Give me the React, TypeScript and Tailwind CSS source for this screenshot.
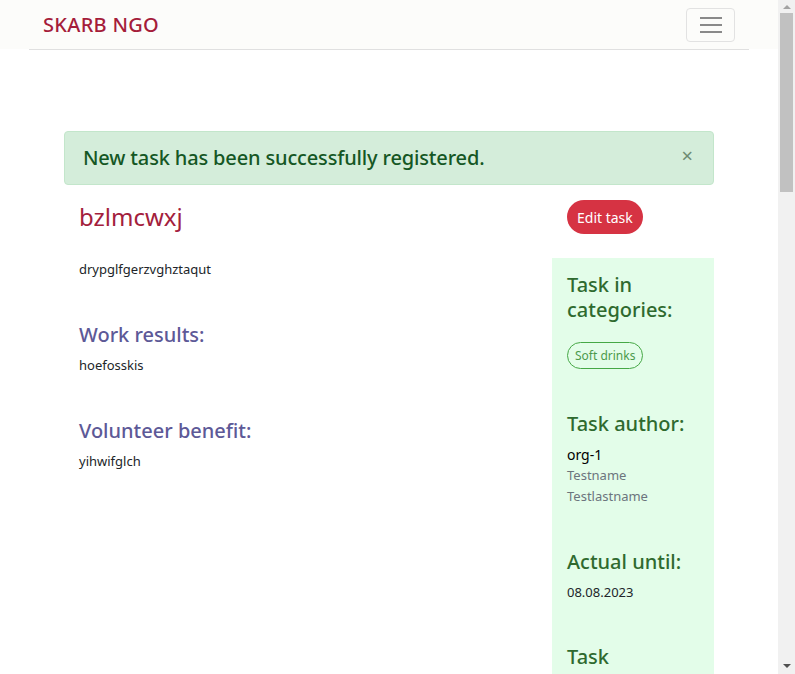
import { useState } from 'react';

const FONT = { fontFamily: '"Noto Sans", "Open Sans", Arial, sans-serif' };

function Navbar() {
  return (
    <nav className="bg-[#fcfcfa]">
      <div className="w-[720px] mx-auto h-[49px] flex items-center justify-between pl-[14px] pr-[14px]">
        <a href="#" className="text-[20px] font-medium text-[#a51d3a] tracking-[0.3px]">
          SKARB NGO
        </a>
        <button className="w-[49px] h-[34px] border border-[#e2e2e2] rounded-[4px] flex flex-col items-center justify-center gap-[5px]">
          <span className="block w-[22px] h-[2px] bg-[#8a8a8a]" />
          <span className="block w-[22px] h-[2px] bg-[#8a8a8a]" />
          <span className="block w-[22px] h-[2px] bg-[#8a8a8a]" />
        </button>
      </div>
    </nav>
  );
}

// the reference page shows a classic (non-overlay) scrollbar on the right
function FakeScrollbar() {
  return (
    <div className="fixed top-0 right-0 w-[17px] h-screen bg-[#f1f1f1] flex flex-col items-center">
      <div className="h-[13px] flex items-center justify-center">
        <span className="block w-0 h-0 border-l-[4px] border-r-[4px] border-b-[4px] border-l-transparent border-r-transparent border-b-[#a3a3a3]" />
      </div>
      <div className="w-[13px] h-[179px] bg-[#c1c1c1]" />
      <div className="flex-1" />
      <div className="h-[17px] flex items-center justify-center">
        <span className="block w-0 h-0 border-l-[4px] border-r-[4px] border-t-[4px] border-l-transparent border-r-transparent border-t-[#505050]" />
      </div>
    </div>
  );
}

function SideSection({ title, children }: { title: string; children?: React.ReactNode }) {
  return (
    <div className="mb-[42px]">
      <h4 className="text-[20px] font-medium leading-[25px] text-[#2f6a2f] mb-[8px]">{title}</h4>
      {children}
    </div>
  );
}

export default function App() {
  const [showAlert, setShowAlert] = useState(true);

  return (
    <div className="min-h-[2400px] bg-white">
      <div className="w-[778px] text-[#212529]" style={FONT}>
        <Navbar />
        <div className="w-[720px] mx-auto border-t border-[#e0e0e0]" />

        <main className="w-[650px] mx-auto pt-[81px]">
          {showAlert && (
            <div className="h-[54px] bg-[#d4edda] border border-[#c3e6cb] rounded-[4px] flex items-center justify-between pl-[18px] pr-[20px]">
              <span className="text-[20px] font-medium tracking-[-0.15px] text-[#155724]">
                New task has been successfully registered.
              </span>
              <button
                onClick={() => setShowAlert(false)}
                className="text-[20px] leading-none text-[#6e8c72] -mt-[4px]"
              >
                ×
              </button>
            </div>
          )}

          <div className="flex mt-[15px]">
            <div className="w-[488px] pl-[15px] pt-[1px]">
              <h2 className="text-[24px] text-[#a3203c] leading-[32px]">bzlmcwxj</h2>
            </div>
            <div className="w-[162px] pl-[15px]">
              <button className="h-[34px] px-[10px] rounded-full bg-[#d63343] text-white text-[14px]">
                Edit task
              </button>
            </div>
          </div>

          <div className="flex mt-[24px]">
            <div className="w-[488px] pl-[15px] pr-[15px] pt-[1px] text-[13px]">
              <p className="leading-[20px]">drypglfgerzvghztaqut</p>

              <h4 className="mt-[43px] text-[20px] font-medium leading-[25px] text-[#5d5997]">Work results:</h4>
              <p className="mt-[8px] leading-[20px]">hoefosskis</p>

              <h4 className="mt-[43px] text-[20px] font-medium leading-[25px] text-[#5d5997]">Volunteer benefit:</h4>
              <p className="mt-[8px] leading-[20px]">yihwifglch</p>
            </div>

            <aside className="w-[162px] bg-[#e3fde9] px-[15px] pt-[14px] pb-[20px] min-h-[900px]">
              <SideSection title="Task in categories:">
                <span className="inline-block mt-[12px] px-[7px] py-[4px] border border-[#46a846] rounded-full text-[12px] leading-[17px] text-[#4c9a4c]">
                  Soft drinks
                </span>
              </SideSection>

              <SideSection title="Task author:">
                <p className="text-[14px] leading-[21px] text-black">org-1</p>
                <p className="text-[13px] leading-[21px] text-[#6c757d]">Testname</p>
                <p className="text-[13px] leading-[21px] text-[#6c757d]">Testlastname</p>
              </SideSection>

              <SideSection title="Actual until:">
                <p className="text-[13px] leading-[20px]">08.08.2023</p>
              </SideSection>

              <SideSection title="Task subcategories:">
                <p className="text-[13px] leading-[20px]">—</p>
              </SideSection>
            </aside>
          </div>
        </main>
      </div>
      <FakeScrollbar />
    </div>
  );
}
